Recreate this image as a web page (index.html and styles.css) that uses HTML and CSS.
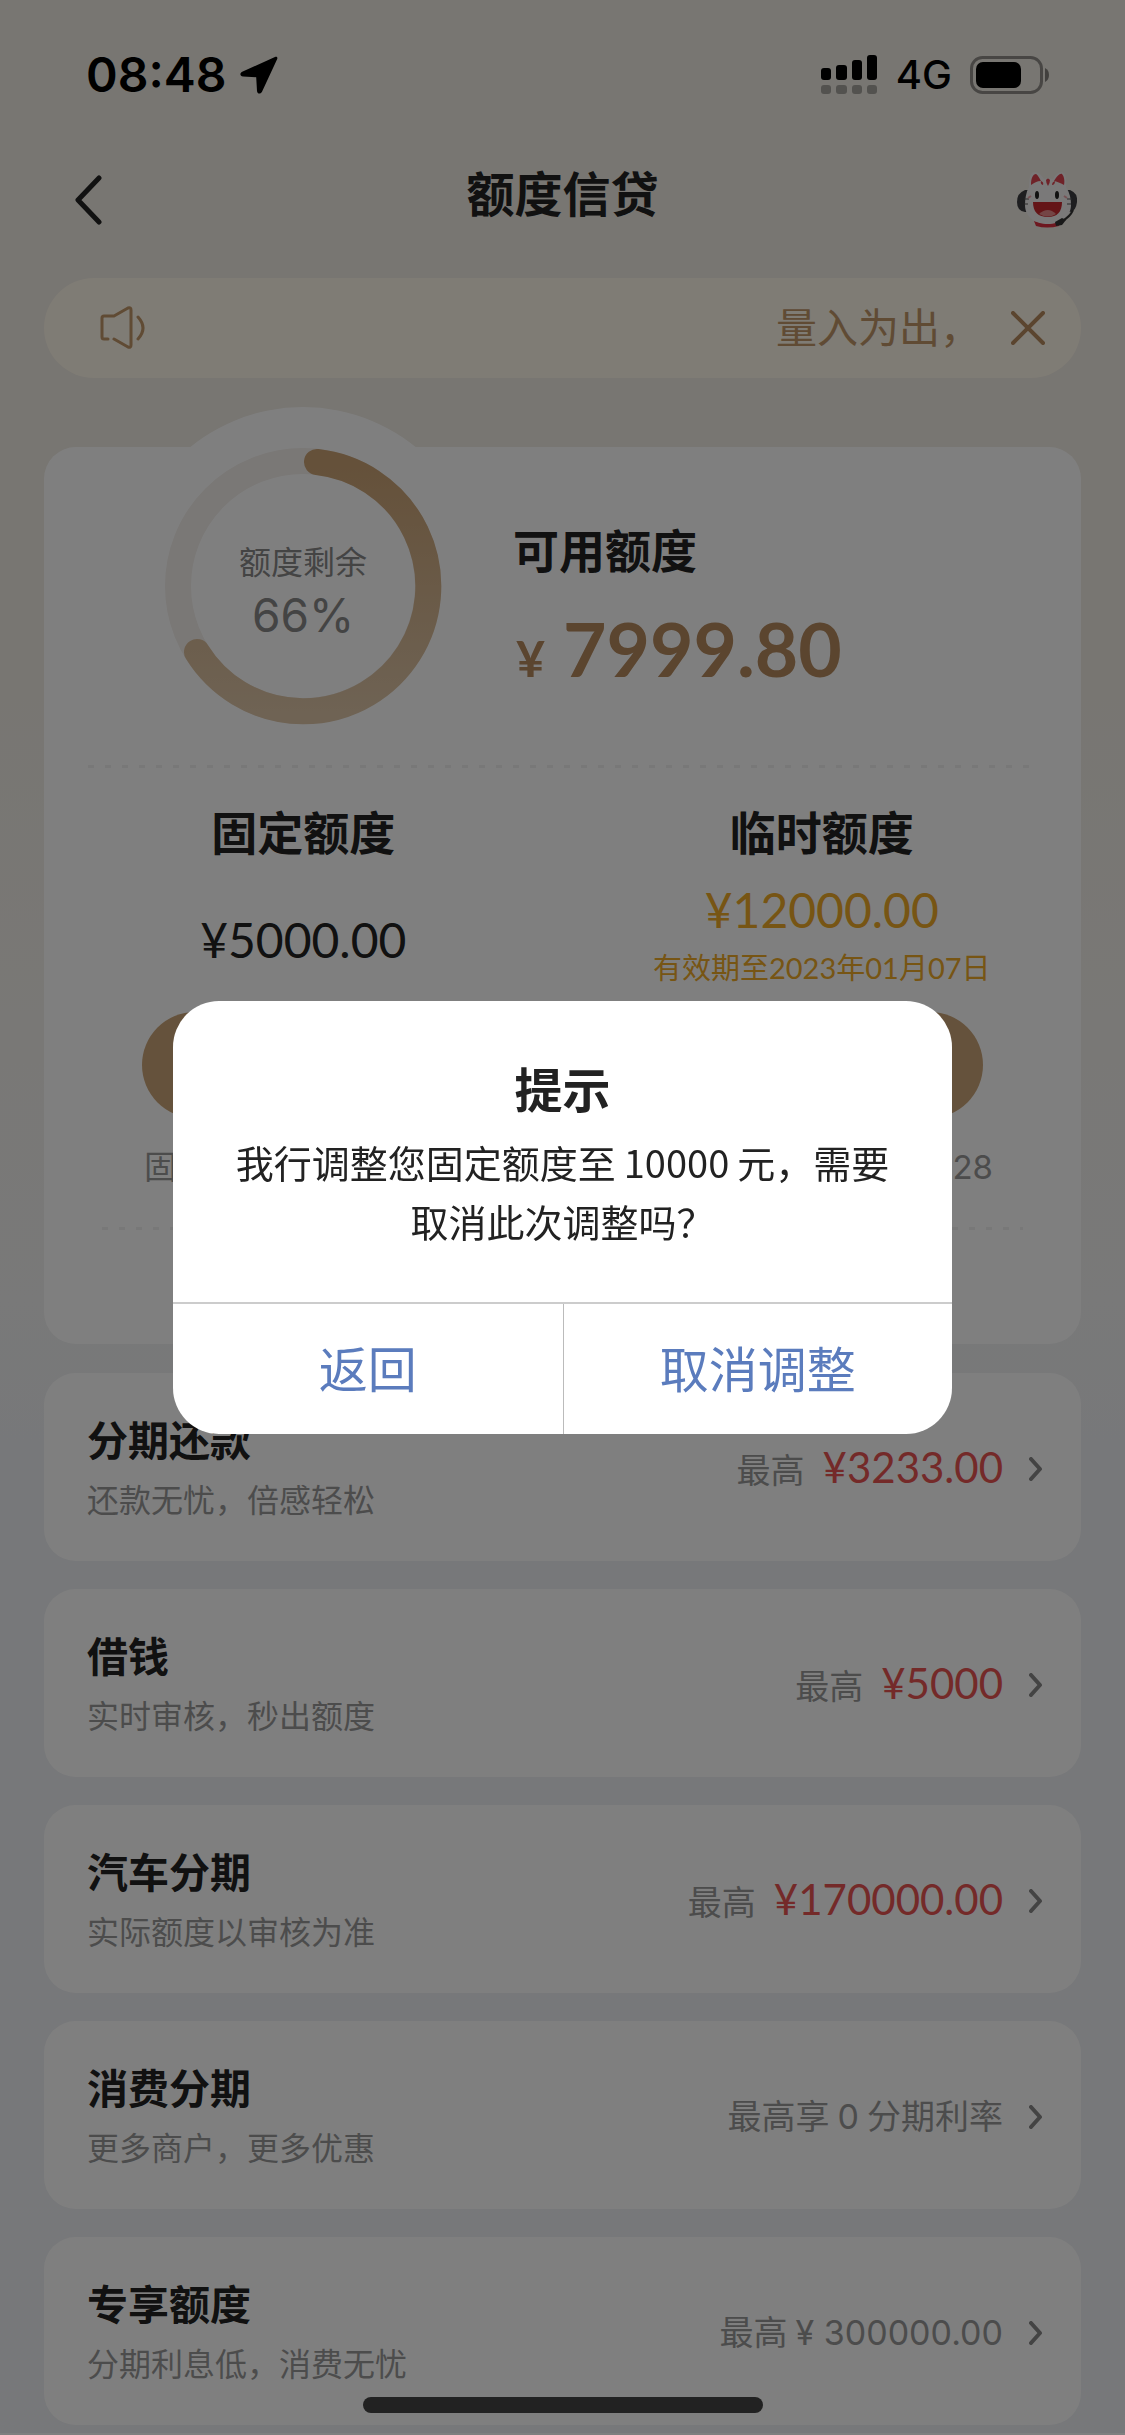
FILE: index.html
```html
<!DOCTYPE html>
<html lang="zh-CN">
<head>
<meta charset="utf-8">
<meta name="viewport" content="width=device-width, initial-scale=1">
<title>额度信贷</title>
<link rel="stylesheet" href="styles.css">
</head>
<body>
<div class="page">
  <div class="status">
    <div class="status-left">
      <span class="time">08:48</span>
      <svg width="38" height="38" viewBox="0 0 38 38" aria-hidden="true"><path d="M35.500 .8 2.200 15.800C-.6 17.200 0 20.400 3 20.600L16.200 21.200 17 35C17.200 38 20.600 38.600 22 35.800L37.200 3C37.800 1.400 36.800.2 35.500.8Z"/></svg>
    </div>
    <div class="status-right">
      <svg width="57" height="40" viewBox="0 0 57 40" aria-hidden="true">
        <rect x="0" y="13" width="10" height="12" rx="3"/><rect x="15" y="10" width="11" height="15" rx="3"/><rect x="31" y="5" width="10" height="20" rx="3"/><rect x="46" y="0" width="10" height="25" rx="3"/>
        <g opacity=".3"><rect x="0" y="30" width="10" height="9" rx="3"/><rect x="15" y="30" width="11" height="9" rx="3"/><rect x="31" y="30" width="10" height="9" rx="3"/><rect x="46" y="30" width="10" height="9" rx="3"/></g>
      </svg>
      <span class="network">4G</span>
      <svg width="80" height="38" viewBox="0 0 80 38" aria-hidden="true">
        <rect x="1.500" y="1.500" width="70" height="35" rx="11" fill="none" stroke="#000" stroke-width="3" opacity=".4"/>
        <rect x="6" y="6" width="45" height="26" rx="7"/>
        <path d="M75 12Q79 14 79 19T75 26Z" opacity=".45"/>
      </svg>
    </div>
  </div>

  <header class="header">
    <button class="icon-btn" aria-label="返回上一页">
      <svg width="28" height="50" viewBox="0 0 28 50"><path d="M25 3 4 25 25 47" fill="none" stroke="#222" stroke-width="5" stroke-linecap="round" stroke-linejoin="round"/></svg>
    </button>
    <h1 class="title">额度信贷</h1>
    <button class="icon-btn" aria-label="在线客服">
      <svg width="62" height="56" viewBox="0 0 62 56">
        <path d="M8 18Q0 21 0 30T8 40H12V18Z" fill="#3c3c40"/>
        <path d="M53 18Q61 21 60 30T53 40H49V18Z" fill="#3c3c40"/>
        <path d="M17 49Q30 53 44 49L42 54Q30 57 19 54Z" fill="#dc3040"/>
        <path d="M12 15C12 6 13 0 18 0 22 0 25 4 27 7 30 6 33 6 36 7 38 3 41 0 45 0 49 1 50 8 49 15 53 21 54 27 54 33 54 45 43 52 31 52 18 52 8 45 8 33 8 27 9 20 12 15Z" fill="#f4f2f2"/>
        <path d="M14 13C14 6 16 2 19 2 21 3 23 7 24 9 20 9 17 11 14 13ZM37 9C40 4 43 1 45 2 47 4 48 9 47 13 44 11 41 10 37 9Z" fill="#de4450"/>
        <path d="M29 8Q31 5 33 8 33 11 31 14 29 11 29 8ZM24 9Q27 10 26 13 23 12 24 9ZM38 9Q38 13 35 13 35 10 38 9Z" fill="#de4450"/>
        <ellipse cx="20" cy="23" rx="2" ry="4" fill="#222"/><ellipse cx="40" cy="23" rx="2" ry="4" fill="#222"/>
        <path d="M16 30H45C45 40 40 45 31 45 21 45 16 40 16 30Z" fill="#c8282f"/>
        <path d="M22 42Q31 34 39 42 31 47 22 42Z" fill="#e88a8a"/>
        <path d="M7 27H12M7 32H11M50 27H55M50 32H54" stroke="#555" stroke-width="1"/>
        <path d="M11 26 14 24M47 24 50 26" stroke="#eea4aa" stroke-width="2"/>
        <path d="M56 38Q53 45 45 49" fill="none" stroke="#333" stroke-width="2"/>
        <path d="M38 50 45 46 49 48 45 53 39 54Z" fill="#333"/>
      </svg>
    </button>
  </header>

  <main class="content">
    <section class="notice">
      <svg width="46" height="44" viewBox="0 0 46 44" fill="none" stroke="#c09668" stroke-width="3" stroke-linecap="round" stroke-linejoin="round" aria-hidden="true"><path d="M8 33H4Q2 33 2 31V12Q2 10 4 10H14L28 2Q31 1 31 4V39Q31 42 28 41L14 33"/><path d="M38 11Q48 22 38 33"/></svg>
      <p class="notice-text">量入为出，</p>
      <button class="icon-btn" aria-label="关闭公告">
        <svg width="34" height="34" viewBox="0 0 34 34"><path d="M2 2 32 32M32 2 2 32" stroke="#b68a5e" stroke-width="4" stroke-linecap="round"/></svg>
      </button>
    </section>

    <section class="quota">
      <div class="summary">
        <div class="gauge">
          <svg width="358" height="358" viewBox="0 0 358 358" aria-hidden="true">
            <defs><linearGradient id="arc" x1="0" y1="0" x2="0" y2="1"><stop offset="0" stop-color="#caa274"/><stop offset="1" stop-color="#dec6a8"/></linearGradient></defs>
            <circle cx="179" cy="179" r="179" fill="#fff"/>
            <circle cx="179" cy="179" r="125" fill="none" stroke="#f4f0ec" stroke-width="26"/>
            <path d="M193 55A125 125 0 1 1 73 245" fill="none" stroke="url(#arc)" stroke-width="26" stroke-linecap="round"/>
          </svg>
          <div class="gauge-label">
            <span class="gauge-name">额度剩余</span>
            <span class="gauge-value">66%</span>
          </div>
        </div>
        <div class="available">
          <h2 class="subhead">可用额度</h2>
          <p class="available-value"><span class="currency">¥</span>7999.80</p>
        </div>
      </div>
      <div class="dots"></div>
      <div class="split">
        <div class="split-item">
          <h2 class="subhead">固定额度</h2>
          <p class="money money-tall">¥5000.00</p>
        </div>
        <div class="split-item split-temp">
          <h2 class="subhead">临时额度</h2>
          <p class="money">¥12000.00</p>
          <p class="expiry">有效期至2023年01月07日</p>
        </div>
      </div>
      <button class="adjust" aria-label="调整额度"></button>
      <p class="note"><span>固</span><span>28</span></p>
      <div class="dots dots-inset"></div>
    </section>

    <nav class="list">
      <a class="row" href="#">
        <span class="row-text"><span class="row-title">分期还款</span><span class="row-sub">还款无忧，倍感轻松</span></span>
        <span class="row-info">最高<span class="row-price">¥3233.00</span></span>
        <svg class="chev" width="14" height="24" viewBox="0 0 14 24"><path d="M2 2 11 12 2 22"/></svg>
      </a>
      <a class="row" href="#">
        <span class="row-text"><span class="row-title">借钱</span><span class="row-sub">实时审核，秒出额度</span></span>
        <span class="row-info">最高<span class="row-price">¥5000</span></span>
        <svg class="chev" width="14" height="24" viewBox="0 0 14 24"><path d="M2 2 11 12 2 22"/></svg>
      </a>
      <a class="row" href="#">
        <span class="row-text"><span class="row-title">汽车分期</span><span class="row-sub">实际额度以审核为准</span></span>
        <span class="row-info">最高<span class="row-price">¥170000.00</span></span>
        <svg class="chev" width="14" height="24" viewBox="0 0 14 24"><path d="M2 2 11 12 2 22"/></svg>
      </a>
      <a class="row" href="#">
        <span class="row-text"><span class="row-title">消费分期</span><span class="row-sub">更多商户，更多优惠</span></span>
        <span class="row-info">最高享<span class="num">0</span>分期利率</span>
        <svg class="chev" width="14" height="24" viewBox="0 0 14 24"><path d="M2 2 11 12 2 22"/></svg>
      </a>
      <a class="row" href="#">
        <span class="row-text"><span class="row-title">专享额度</span><span class="row-sub">分期利息低，消费无忧</span></span>
        <span class="row-info">最高<span class="num num-end">¥ 300000.00</span></span>
        <svg class="chev" width="14" height="24" viewBox="0 0 14 24"><path d="M2 2 11 12 2 22"/></svg>
      </a>
    </nav>
  </main>
</div>

<div class="overlay">
  <div class="dialog" role="dialog" aria-modal="true" aria-labelledby="dialog-title">
    <h2 class="dialog-title" id="dialog-title">提示</h2>
    <p class="dialog-text">我行调整您固定额度至<span class="num">10000</span>元，需要取消此次调整吗？</p>
    <div class="dialog-actions">
      <button class="dialog-btn">返回</button>
      <button class="dialog-btn">取消调整</button>
    </div>
  </div>
</div>
<div class="home-bar"></div>
</body>
</html>
```
FILE: styles.css
```css
* {
  box-sizing: border-box;
}

body,
h1,
h2,
p {
  margin: 0;
}

body {
  font-family: Inter, "Noto Sans CJK SC", sans-serif;
  color: #222;
}

button {
  border: 0;
  padding: 0;
  background: none;
  color: inherit;
  font: inherit;
}

svg {
  display: block;
}

.page {
  background: linear-gradient(#f0ece4 0, #f0ece4 650px, #f3f1ed 1060px, #f2f2f2 1300px, #eff1f4 1440px);
  padding-bottom: 8px;
}

/* status bar */
.status {
  display: flex;
  justify-content: space-between;
  align-items: center;
  height: 117px;
  padding: 33px 75px 0 86px;
  color: #000;
}

.status-left,
.status-right {
  display: flex;
  align-items: center;
}

.status-left {
  gap: 14px;
}

.status-right {
  gap: 18px;
}

.time {
  font-size: 48px;
  font-weight: 600;
  line-height: 60px;
}

.network {
  font-size: 40px;
  font-weight: 500;
  line-height: 48px;
}

/* header */
.header {
  display: flex;
  justify-content: space-between;
  align-items: center;
  height: 161px;
  padding: 4px 46px 0 74px;
}

.title {
  flex: 1;
  padding: 0 0 10px 6px;
  font-size: 48px;
  font-weight: 700;
  line-height: 64px;
  text-align: center;
}

.content {
  padding: 0 44px;
}

.notice {
  display: flex;
  align-items: center;
  height: 100px;
  padding: 0 36px 0 56px;
  border-radius: 50px;
  background: #fff8ea;
  color: #c09668;
}

.notice-text {
  flex: 1;
  padding-right: 30px;
  font-size: 41px;
  line-height: 56px;
  text-align: right;
}

/* quota card */
.quota {
  margin-top: 69px;
  padding-bottom: 114px;
  border-radius: 32px;
  background: #fff;
}

.summary {
  display: flex;
  gap: 31px;
  padding-left: 80px;
}

.gauge {
  display: grid;
  margin-top: -40px;
}

.gauge > * {
  grid-area: 1 / 1;
}

.gauge-label {
  display: flex;
  flex-direction: column;
  align-items: center;
  padding-top: 134px;
  color: #888;
}

.gauge-name {
  font-size: 32px;
  line-height: 44px;
}

.gauge-value {
  font-size: 46px;
  line-height: 60px;
}

.subhead {
  font-size: 46px;
  font-weight: 700;
  line-height: 64px;
}

.available {
  padding-top: 72px;
}

.available-value {
  font-family: Lato, sans-serif;
  font-size: 75px;
  font-weight: 700;
  line-height: 100px;
  margin-top: 15px;
  color: #b68a5e;
}

.currency {
  margin: 0 18px 0 3px;
  font-size: 50px;
}

.dots {
  height: 3px;
  margin: 0 44px;
  background: repeating-linear-gradient(90deg, #f0f0f0 0 6px, transparent 6px 17px);
}

.dots-inset {
  margin: 36px 58px 0;
}

.split {
  display: grid;
  grid-template-columns: 1fr 1fr;
  padding-top: 33px;
  text-align: center;
}

.money {
  margin-top: 15px;
  font-family: Lato, sans-serif;
  font-size: 48px;
  line-height: 60px;
}

.money-tall {
  line-height: 120px;
}

.split-temp .money,
.expiry {
  color: #eeaa28;
}

.expiry {
  font-family: Lato, "Noto Sans CJK SC", sans-serif;
  font-size: 29px;
  line-height: 56px;
}

.adjust {
  display: block;
  width: calc(100% - 196px);
  height: 106px;
  margin: 12px 98px 0;
  border-radius: 53px;
  background: #cba578;
}

.note {
  display: flex;
  justify-content: space-between;
  margin: 25px 88px 0 100px;
  font-size: 33px;
  line-height: 48px;
  color: #999;
}

/* product list */
.list {
  display: grid;
  gap: 28px;
  margin-top: 29px;
}

.row {
  display: flex;
  align-items: center;
  height: 188px;
  padding: 4px 38px 0 43px;
  border-radius: 32px;
  background: #fff;
  color: inherit;
  text-decoration: none;
}

.row-text {
  display: flex;
  flex: 1;
  flex-direction: column;
  gap: 8px;
}

.row-title {
  font-size: 41px;
  font-weight: 700;
  line-height: 56px;
}

.row-sub {
  font-size: 32px;
  line-height: 48px;
  color: #999;
}

.row-info {
  font-size: 34px;
  line-height: 60px;
  color: #999;
}

.row-price {
  margin-left: 18px;
  font-family: Lato, sans-serif;
  font-size: 42px;
  color: #e85452;
}

.num {
  margin: 0 8px;
}

.num-end {
  margin-right: 0;
}

.chev {
  margin-left: 26px;
  fill: none;
  stroke: #888;
  stroke-width: 4;
  stroke-linecap: round;
  stroke-linejoin: round;
}

/* dialog */
.overlay {
  position: fixed;
  inset: 0;
  display: flex;
  align-items: center;
  justify-content: center;
  background: rgba(0, 0, 0, 0.5);
}

.dialog {
  width: 779px;
  max-width: 90%;
  overflow: hidden;
  border-radius: 46px;
  background: #fff;
}

.dialog-title {
  padding-top: 57px;
  font-size: 48px;
  font-weight: 700;
  line-height: 66px;
  text-align: center;
}

.dialog-text {
  padding: 8px 50px 52px;
  font-family: "Noto Sans CJK SC", sans-serif;
  font-size: 38px;
  line-height: 59px;
  text-align: center;
}

.dialog-actions {
  display: grid;
  grid-template-columns: 1fr 1fr;
  border-top: 2px solid #ccc;
}

.dialog-btn {
  height: 130px;
  padding-bottom: 6px;
  font-size: 49px;
  color: #5b7cbd;
}

.dialog-btn + .dialog-btn {
  border-left: 1px solid #bbb;
}

.home-bar {
  position: fixed;
  bottom: 22px;
  left: 50%;
  width: 400px;
  height: 16px;
  margin-left: -200px;
  border-radius: 8px;
  background: #222;
}
```
